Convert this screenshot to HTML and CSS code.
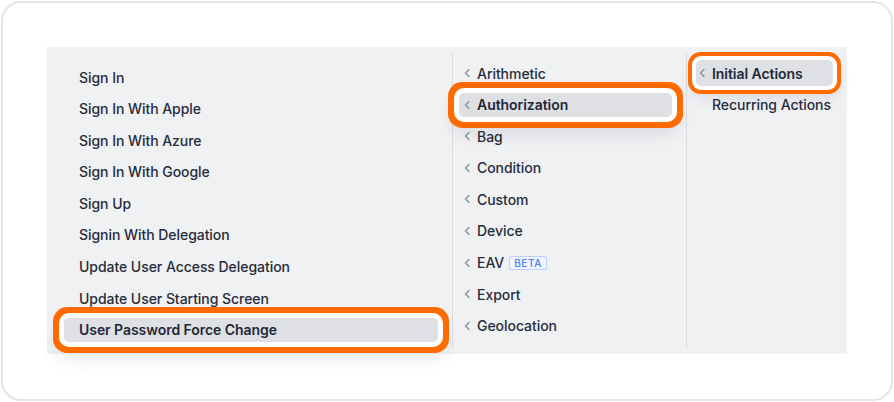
FILE: index.html
```html
<!DOCTYPE html>
<html>
<head>
<meta charset="utf-8">
<link rel="stylesheet" href="styles.css">
</head>
<body>
<div class="frame">
  <div class="panel">
    <div class="col col-left">
      <div class="item">Sign In</div>
      <div class="item">Sign In With Apple</div>
      <div class="item">Sign In With Azure</div>
      <div class="item">Sign In With Google</div>
      <div class="item">Sign Up</div>
      <div class="item">Signin With Delegation</div>
      <div class="item">Update User Access Delegation</div>
      <div class="item">Update User Starting Screen</div>
      <div class="item active">User Password Force Change</div>
    </div>
    <div class="divider"></div>
    <div class="col col-mid">
      <div class="item"><svg class="chev" viewBox="0 0 8 10"><path d="M6 1.5 2.5 5 6 8.5"/></svg>Arithmetic</div>
      <div class="item active"><svg class="chev" viewBox="0 0 8 10"><path d="M6 1.5 2.5 5 6 8.5"/></svg>Authorization</div>
      <div class="item"><svg class="chev" viewBox="0 0 8 10"><path d="M6 1.5 2.5 5 6 8.5"/></svg>Bag</div>
      <div class="item"><svg class="chev" viewBox="0 0 8 10"><path d="M6 1.5 2.5 5 6 8.5"/></svg>Condition</div>
      <div class="item"><svg class="chev" viewBox="0 0 8 10"><path d="M6 1.5 2.5 5 6 8.5"/></svg>Custom</div>
      <div class="item"><svg class="chev" viewBox="0 0 8 10"><path d="M6 1.5 2.5 5 6 8.5"/></svg>Device</div>
      <div class="item"><svg class="chev" viewBox="0 0 8 10"><path d="M6 1.5 2.5 5 6 8.5"/></svg>EAV<span class="badge">BETA</span></div>
      <div class="item"><svg class="chev" viewBox="0 0 8 10"><path d="M6 1.5 2.5 5 6 8.5"/></svg>Export</div>
      <div class="item"><svg class="chev" viewBox="0 0 8 10"><path d="M6 1.5 2.5 5 6 8.5"/></svg>Geolocation</div>
    </div>
    <div class="divider"></div>
    <div class="col col-right">
      <div class="item active thin"><svg class="chev" viewBox="0 0 8 10"><path d="M6 1.5 2.5 5 6 8.5"/></svg>Initial Actions</div>
      <div class="item plain">Recurring Actions</div>
    </div>
  </div>
</div>
</body>
</html>
```
FILE: styles.css
```css
html, body {
  margin: 0;
  padding: 0;
  background: #ffffff;
}
body {
  font-family: Inter, "Noto Sans", sans-serif;
  color: #262c3b;
}
.frame {
  box-sizing: border-box;
  margin: 1px;
  width: 892px;
  height: 400px;
  border: 2px solid #e3e5e9;
  border-radius: 20px;
  padding: 44px;
  background: #ffffff;
}
.panel {
  display: flex;
  width: 800px;
  height: 307px;
  background: #f0f1f3;
}
.col {
  display: flex;
  flex-direction: column;
  gap: 7.6px;
  box-sizing: border-box;
}
.col-left {
  width: 405px;
  padding: 18px 14px 0 17px;
}
.col-mid {
  width: 233px;
  padding: 14px 14px 0 6px;
}
.col-right {
  width: 160px;
  padding: 14px 14px 0 9px;
}
.divider {
  width: 1px;
  background: #d9dbe0;
  margin: 6px 0 5px;
}
.item {
  display: flex;
  align-items: center;
  height: 24px;
  font-size: 14px;
  font-weight: 500;
  letter-spacing: -0.05px;
  white-space: nowrap;
  border-radius: 5px;
}
.col-left .item {
  padding-left: 15px;
}
.col-mid .item {
  padding-left: 4px;
}
.col-right .item {
  padding-left: 2px;
}
.col-right .item.plain {
  padding-left: 16px;
}
.chev {
  width: 8px;
  height: 10px;
  margin-right: 6px;
  fill: none;
  stroke: #8b909a;
  stroke-width: 1.4;
  stroke-linecap: round;
  stroke-linejoin: round;
}
.item.active {
  background: #dfe0e4;
  font-weight: 600;
  color: #222837;
  box-shadow: 0 0 0 5px #ffffff, 0 0 0 11px #ff6b00, 0 10px 18px 6px rgba(20, 24, 40, 0.10);
}
.item.active.thin {
  height: 26px;
  margin-top: -1px;
  margin-bottom: -1px;
  box-shadow: 0 0 0 4px #ffffff, 0 0 0 8px #ff6b00, 0 8px 16px 4px rgba(20, 24, 40, 0.10);
}
.badge {
  margin-left: 5px;
  height: 14px;
  box-sizing: border-box;
  padding: 0 4px;
  border: 1px solid #bfd0fa;
  border-radius: 2px;
  background: #f0f4ff;
  color: #4f7ff0;
  font-size: 10px;
  font-weight: 500;
  letter-spacing: 0.6px;
  line-height: 12px;
  display: inline-flex;
  align-items: center;
}
```
